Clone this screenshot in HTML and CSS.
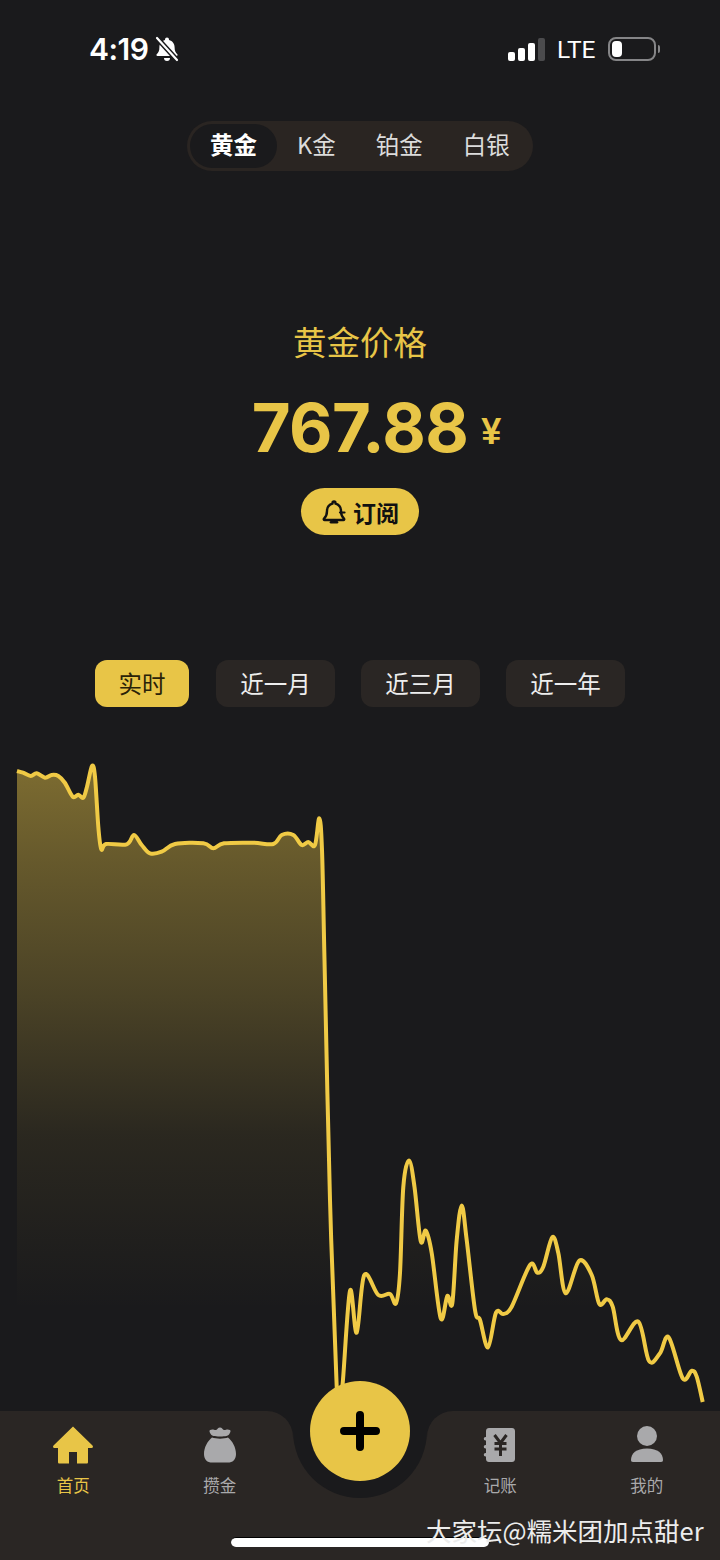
FILE: index.html
```html
<!DOCTYPE html>
<html lang="zh">
<head>
    <meta charset="UTF-8">
    <meta name="viewport" content="width=device-width, initial-scale=1.0">
    <title>黄金价格</title>
    <link rel="stylesheet" href="styles.css">
</head>
<body>
<div class="status-bar">
    <div class="status-left">
        <span class="time">4:19</span>
        <svg class="mute-icon" viewBox="0 0 26 26">
            <path d="M13 1.500a2 2 0 0 1 2 2v.4c3.600.9 5.600 3.800 5.600 7.400 0 3.600 1 5.400 2.700 7 .6.6.2 1.700-.7 1.700H3.400c-.9 0-1.300-1.100-.7-1.700 1.700-1.600 2.700-3.400 2.700-7 0-3.600 2-6.500 5.600-7.400v-.4a2 2 0 0 1 2-2z" fill="#fff"/>
            <path d="M10 22h6a3 3 0 0 1-6 0z" fill="#fff"/>
            <path d="M3 2l20 22" stroke="#1a1a1c" stroke-width="5"/>
            <path d="M3 2l20 22" stroke="#fff" stroke-width="2.200" stroke-linecap="round"/>
        </svg>
    </div>
    <div class="status-right">
        <div class="signal">
            <span class="bar bar-1"></span>
            <span class="bar bar-2"></span>
            <span class="bar bar-3"></span>
            <span class="bar bar-4"></span>
        </div>
        <span class="network">LTE</span>
        <div class="battery"><span class="battery-level"></span></div>
        <span class="battery-cap"></span>
    </div>
</div>

<div class="metal-tabs">
    <span class="metal-tab active">黄金</span>
    <span class="metal-tab">K金</span>
    <span class="metal-tab">铂金</span>
    <span class="metal-tab">白银</span>
</div>

<div class="price-box">
    <div class="price-title">黄金价格</div>
    <div class="price-row">
        <span class="price-value">767.88</span>
        <span class="price-unit">¥</span>
    </div>
    <button class="subscribe">
        <svg class="subscribe-icon" viewBox="0 0 26 26">
            <path d="M13 2.500c-.9 0-1.500.6-1.500 1.500v.7C8 5.700 6 8.500 6 12c0 3.800-1 5.700-3 7.600-.5.500-.2 1.400.6 1.400h18.800c.8 0 1.100-.9.600-1.400-2-1.900-3-3.800-3-7.600 0-3.500-2-6.300-5.500-7.300V4c0-.9-.6-1.500-1.500-1.500z" fill="none" stroke="#111" stroke-width="2.400" stroke-linejoin="round"/>
            <path d="M10 23.300h6" stroke="#111" stroke-width="2.600" stroke-linecap="round"/>
            <path d="M19 13.500h4.500" stroke="#111" stroke-width="2.200" stroke-linecap="round"/>
        </svg>
        <span>订阅</span>
    </button>
</div>

<div class="range-tabs">
    <span class="range-tab active">实时</span>
    <span class="range-tab">近一月</span>
    <span class="range-tab">近三月</span>
    <span class="range-tab">近一年</span>
</div>

<svg class="chart" viewBox="0 740 720 671">
    <defs>
        <linearGradient id="chart-fill" gradientUnits="userSpaceOnUse" x1="0" y1="766" x2="0" y2="1310">
            <stop offset="0" stop-color="#e8c547" stop-opacity="0.48"/>
            <stop offset="0.173" stop-color="#e8c547" stop-opacity="0.37"/>
            <stop offset="0.43" stop-color="#e8c547" stop-opacity="0.23"/>
            <stop offset="0.678" stop-color="#e8c547" stop-opacity="0.08"/>
            <stop offset="0.87" stop-color="#e8c547" stop-opacity="0.03"/>
            <stop offset="1" stop-color="#e8c547" stop-opacity="0"/>
        </linearGradient>
    </defs>
    <path id="chart-area" fill="url(#chart-fill)"/>
    <path id="chart-line" fill="none" stroke="#f0ca45" stroke-width="4" stroke-linecap="butt" stroke-linejoin="round"/>
</svg>

<div class="tab-bar">
    <div class="tab-panel left">
        <div class="nav-item active">
            <svg class="nav-icon" viewBox="0 0 42 40">
                <path d="M21 1.500 L40.500 20.500 c1 1.200.4 2.500-1 2.500 H36 V37 c0 1-.5 1.500-1.500 1.500 H25 V27 h-8 v11.500 H7.500 C6.500 38.500 6 38 6 37 V23 H2.500 c-1.400 0-2-1.300-1-2.500 z" fill="#e8c547"/>
            </svg>
            <span>首页</span>
        </div>
        <div class="nav-item">
            <svg class="nav-icon" viewBox="0 0 42 40">
                <path d="M11 5c3-1.500 4.500.5 6 0s2-2.500 4-2.500 2.500 2 4 2.500 3-1.500 6 0c1 .6.500 2.500-1 4.500-1 1.300-3 2-9 2s-8-.7-9-2c-1.500-2-2-3.900-1-4.500z" fill="#a9a9ab"/>
                <path d="M13 12.500c4 1.500 12 1.500 16 0 4.500 3.500 8 10 8 16.500 0 6-3.500 8.500-8 8.500H13c-4.500 0-8-2.500-8-8.500 0-6.500 3.500-13 8-16.500z" fill="#a9a9ab"/>
            </svg>
            <span>攒金</span>
        </div>
    </div>
    <div class="notch">
        <div class="notch-cut"></div>
        <div class="fab">
            <svg class="fab-icon" viewBox="0 0 40 40">
                <path d="M20 4v32M4 20h32" stroke="#000" stroke-width="8" stroke-linecap="round"/>
            </svg>
        </div>
    </div>
    <div class="tab-panel right">
        <div class="nav-item">
            <svg class="nav-icon" viewBox="0 0 42 40">
                <path d="M10 3h23c1.700 0 3 1.300 3 3v28c0 1.700-1.300 3-3 3H10c-1.700 0-3-1.300-3-3v-2.500h-.5a1.500 1.500 0 0 1 0-3.500h.5v-4.500h-.5a1.500 1.500 0 0 1 0-3.500h.5v-4.500h-.5a1.500 1.500 0 0 1 0-3.500h.5V6c0-1.700 1.300-3 3-3z" fill="#a9a9ab"/>
                <path d="M15.500 10l6 8 6-8M21.500 18v13M15.500 18.500h12M15.500 24h12" fill="none" stroke="#2a2624" stroke-width="3"/>
            </svg>
            <span>记账</span>
        </div>
        <div class="nav-item">
            <svg class="nav-icon" viewBox="0 0 42 40">
                <circle cx="21" cy="11" r="10" fill="#a9a9ab"/>
                <path d="M7 37c-1.500 0-2-.8-2-2 0-6.500 5-11.500 16-11.500S37 28.500 37 35c0 1.200-.5 2-2 2z" fill="#a9a9ab"/>
            </svg>
            <span>我的</span>
        </div>
    </div>
</div>

<div class="home-indicator"></div>
<div class="watermark">大家坛@糯米团加点甜er</div>

<script src="chart.js"></script>
</body>
</html>
```

FILE: styles.css
```css
body {
    font-family: "Noto Sans CJK SC", "Noto Sans", sans-serif;
    margin: 0;
    padding: 0;
    width: 720px;
    height: 1560px;
    overflow: hidden;
    position: relative;
    background: #1a1a1c;
    color: #f0f0f0;
    display: flex;
    flex-direction: column;
    align-items: center;
}

.status-bar {
    width: 100%;
    height: 100px;
    box-sizing: border-box;
    padding: 29px 60px 0 89px;
    display: flex;
    justify-content: space-between;
    align-items: flex-start;
}

.status-left {
    display: flex;
    align-items: center;
    gap: 6px;
    height: 40px;
}

.time {
    font-family: Inter, sans-serif;
    font-size: 30px;
    font-weight: 600;
    letter-spacing: -0.5px;
    color: #fff;
}

.mute-icon {
    width: 26px;
    height: 26px;
}

.status-right {
    display: flex;
    align-items: center;
    height: 40px;
}

.signal {
    display: flex;
    align-items: flex-end;
    gap: 3px;
    height: 24px;
    margin-right: 12px;
}

.bar {
    width: 7px;
    background: #fff;
    border-radius: 2px;
}

.bar-1 { height: 9px; }
.bar-2 { height: 13px; }
.bar-3 { height: 18px; }
.bar-4 { height: 23px; background: #4b4b4d; }

.network {
    font-family: "Liberation Sans Narrow", Roboto, sans-serif;
    font-size: 24.500px;
    color: #fff;
    margin-right: 14px;
    width: 37px;
}

.battery {
    width: 48px;
    height: 24px;
    box-sizing: border-box;
    border: 2px solid #858587;
    border-radius: 8px;
    padding: 2px;
}

.battery-level {
    display: block;
    width: 10px;
    height: 100%;
    background: #fff;
    border-radius: 4px;
}

.battery-cap {
    width: 2px;
    height: 8px;
    margin-left: 2px;
    background: #858587;
    border-radius: 0 2px 2px 0;
}

.metal-tabs {
    margin-top: 21px;
    width: 346px;
    height: 50px;
    box-sizing: border-box;
    padding: 3px;
    background: #2a2522;
    border-radius: 25px;
    display: flex;
}

.metal-tab {
    padding: 0 20px 4px;
    font-size: 23.500px;
    line-height: 40px;
    color: #dcdcdc;
    white-space: nowrap;
}

.metal-tab.active {
    background: #1a1a1c;
    border-radius: 22px;
    color: #fff;
    font-weight: bold;
}

.price-box {
    display: flex;
    flex-direction: column;
    align-items: center;
}

.price-title {
    margin-top: 146px;
    font-size: 33.500px;
    line-height: 48px;
    color: #e8c547;
}

.price-row {
    margin-top: 17px;
    height: 90px;
    position: relative;
    font-family: Inter, "Liberation Sans", sans-serif;
    font-weight: 700;
    color: #e8c547;
}

.price-value {
    font-size: 67px;
    line-height: 92px;
    letter-spacing: -0.500px;
}

.price-unit {
    position: absolute;
    left: calc(100% + 13px);
    top: 28px;
    font-family: "Liberation Sans", sans-serif;
    font-size: 36px;
    line-height: 44px;
}

.subscribe {
    margin-top: 16px;
    width: 118px;
    height: 47px;
    border: none;
    border-radius: 24px;
    background: #e8c547;
    color: #111;
    font-family: inherit;
    font-size: 23px;
    font-weight: bold;
    display: flex;
    align-items: center;
    justify-content: center;
    gap: 6px;
    padding: 0;
}

.subscribe-icon {
    width: 26px;
    height: 26px;
}

.range-tabs {
    margin-top: 125px;
    display: flex;
    gap: 26px;
}

.range-tab {
    width: 119px;
    height: 47px;
    line-height: 47px;
    text-align: center;
    background: #2a2624;
    border-radius: 12px;
    font-size: 23.500px;
    color: #eee;
}

.range-tab.active {
    width: 94px;
    margin-right: 1px;
    background: #e8c547;
    color: #2a2208;
}

.chart {
    display: block;
    margin-top: 33px;
    width: 720px;
    height: 671px;
    flex-shrink: 0;
}

.tab-bar {
    width: 100%;
    height: 149px;
    display: flex;
    flex-shrink: 0;
}

.tab-panel {
    width: 293px;
    background: #2a2624;
    display: flex;
}

.tab-panel.left {
    border-top-right-radius: 26px;
}

.tab-panel.right {
    border-top-left-radius: 26px;
}

.notch {
    width: 134px;
    position: relative;
    background: linear-gradient(to bottom, transparent 20px, #2a2624 20px);
}

.notch-cut {
    height: 87px;
    background: #1a1a1c;
    border-radius: 0 0 67px 67px;
}

.fab {
    position: absolute;
    left: 17px;
    top: -30px;
    width: 100px;
    height: 100px;
    border-radius: 50%;
    background: #e8c547;
    display: flex;
    align-items: center;
    justify-content: center;
}

.fab-icon {
    width: 40px;
    height: 40px;
}

.nav-item {
    width: 50%;
    padding-top: 14px;
    display: flex;
    flex-direction: column;
    align-items: center;
    font-size: 16.500px;
    line-height: 24px;
    color: #a9a9ab;
}

.nav-item.active {
    color: #e8c547;
}

.nav-icon {
    width: 42px;
    height: 40px;
    margin-bottom: 8px;
}

.home-indicator {
    position: absolute;
    left: 231px;
    top: 1537px;
    width: 258px;
    height: 10px;
    box-sizing: border-box;
    border-top: 1px solid #000;
    border-radius: 5px;
    background: #fff;
}

.watermark {
    position: absolute;
    left: 426px;
    top: 1510px;
    font-size: 25.500px;
    line-height: 40px;
    color: #ececec;
    white-space: nowrap;
}
```

FILE: chart.js
```js
// price points, in page pixels
const points = [
    [17, 771], [23, 772.7], [30.7, 776], [36.7, 773.3], [45, 777.7], [51.7, 775], [58.3, 776],
    [65, 783], [72.7, 796.7], [78.3, 794.7], [83.3, 797.7], [87, 786.7], [92, 766], [95, 776.7],
    [98.3, 826.7], [101.3, 849.3], [106, 844], [126.7, 844.3], [134, 835], [141.7, 845],
    [150, 853.3], [161.7, 851.7], [175, 844], [203.3, 843.3], [213.3, 848.3], [224, 843.3],
    [253, 842.7], [273.3, 844], [281.7, 835], [293.3, 835], [301.7, 845], [308.3, 842],
    [315, 845], [319.3, 818.3], [322, 850], [324.5, 960], [330, 1200], [336.7, 1386.7],
    [339, 1405], [342.7, 1383], [350, 1290.7], [356.7, 1332.7], [364.3, 1275], [378.3, 1295],
    [390, 1294], [396, 1303.3], [400, 1273], [403.3, 1187], [409, 1160.5], [414.5, 1187],
    [420.7, 1241], [425.7, 1230.7], [431.7, 1253], [440.7, 1318.3], [447.3, 1296],
    [452.3, 1303.3], [456.7, 1240], [461.7, 1205.5], [466.7, 1240], [475, 1310], [480, 1320],
    [488, 1347.3], [496, 1312.7], [503.3, 1314], [511.7, 1306.7], [530, 1265], [537.3, 1272.7],
    [543.3, 1266.7], [552.3, 1237.3], [558.3, 1253], [565.7, 1293.3], [579.3, 1260.7],
    [591.7, 1275], [599.3, 1304], [606.7, 1299.3], [612.7, 1306.7], [621, 1340], [638.3, 1321.7],
    [649, 1361], [660, 1353.3], [668.7, 1337.3], [682.7, 1378.3], [691.7, 1370.7],
    [696.7, 1376.7], [702.7, 1402]
];

// catmull-rom to bezier
function smoothPath(pts) {
    let d = `M${pts[0][0]} ${pts[0][1]}`;
    for (let i = 0; i < pts.length - 1; i++) {
        const p0 = pts[i - 1] || pts[i];
        const p1 = pts[i];
        const p2 = pts[i + 1];
        const p3 = pts[i + 2] || p2;
        const c1x = p1[0] + (p2[0] - p0[0]) / 6;
        const c1y = p1[1] + (p2[1] - p0[1]) / 6;
        const c2x = p2[0] - (p3[0] - p1[0]) / 6;
        const c2y = p2[1] - (p3[1] - p1[1]) / 6;
        d += ` C${c1x.toFixed(1)} ${c1y.toFixed(1)} ${c2x.toFixed(1)} ${c2y.toFixed(1)} ${p2[0]} ${p2[1]}`;
    }
    return d;
}

const line = smoothPath(points);
document.getElementById('chart-line').setAttribute('d', line);
document.getElementById('chart-area').setAttribute('d', `${line} L702.7 1411 L17 1411 Z`);
```
